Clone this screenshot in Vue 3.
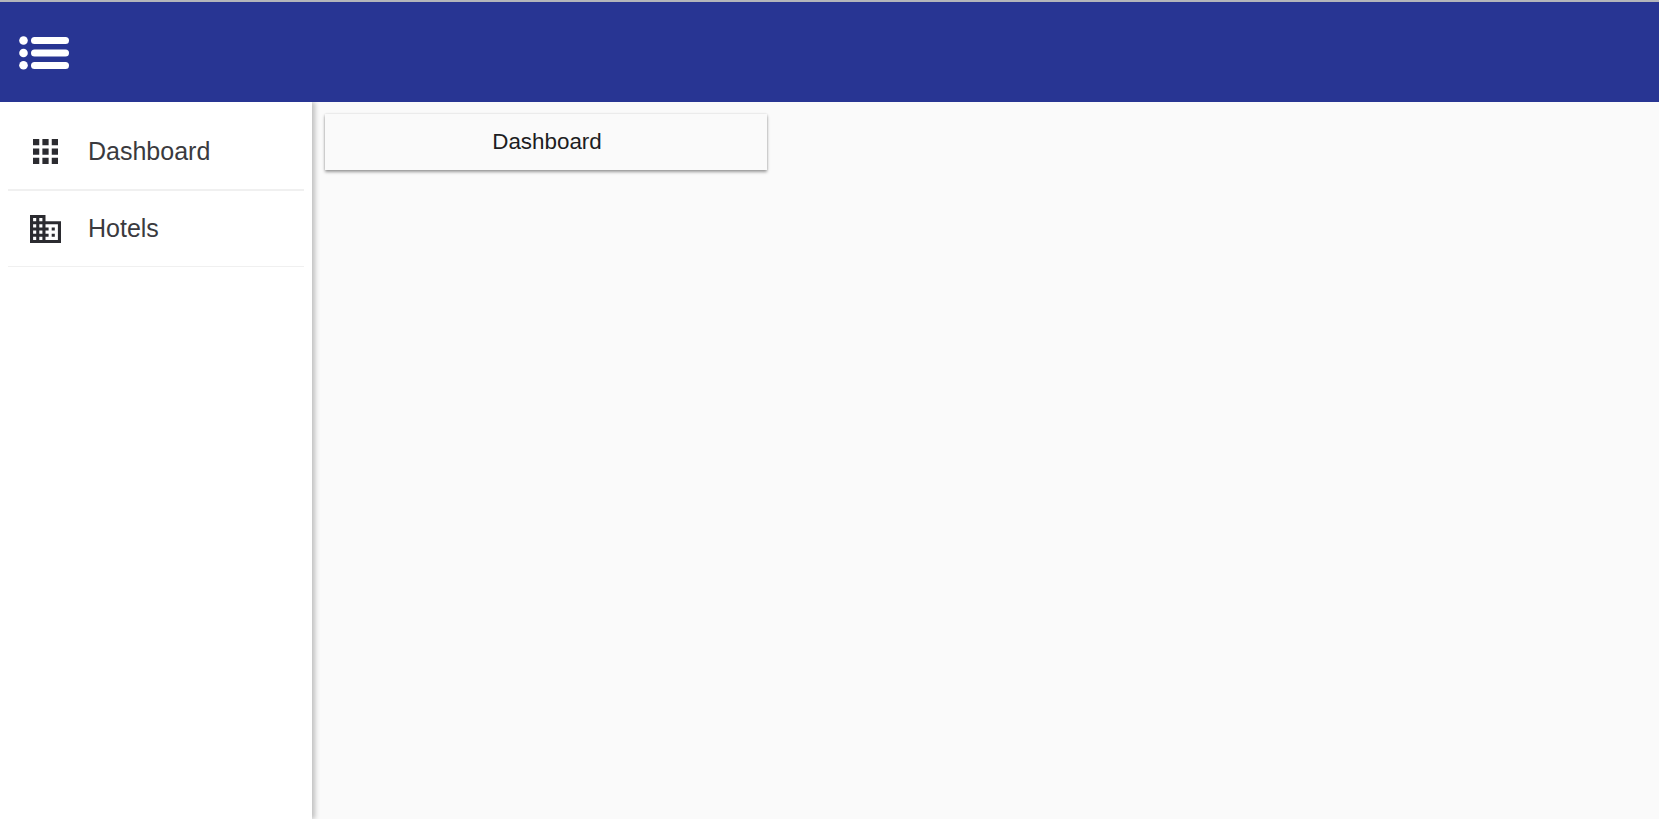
<script setup>
const menu = [
  { label: 'Dashboard', icon: 'grid' },
  { label: 'Hotels', icon: 'hotel' },
]
</script>

<template>
  <div class="page">
    <header class="topbar">
      <svg class="menu-icon" width="52" height="34" viewBox="0 0 52 34" fill="#fff">
        <circle cx="4.5" cy="4.5" r="4.3" />
        <circle cx="4.5" cy="17" r="4.3" />
        <circle cx="4.5" cy="29.3" r="4.3" />
        <rect x="12" y="1" width="38" height="7" rx="3.5" />
        <rect x="12" y="13.5" width="38" height="7" rx="3.5" />
        <rect x="12" y="26" width="38" height="7" rx="3.5" />
      </svg>
    </header>
    <div class="body">
      <aside class="sidebar">
        <a v-for="item in menu" :key="item.label" class="item">
          <span class="icon-slot">
            <svg v-if="item.icon === 'grid'" width="25" height="25" viewBox="4 4 16 16" fill="#2b2b30">
              <path d="M4 8h4V4H4v4zm6 12h4v-4h-4v4zm-6 0h4v-4H4v4zm0-6h4v-4H4v4zm6 0h4v-4h-4v4zm6-10v4h4V4h-4zm-6 4h4V4h-4v4zm6 6h4v-4h-4v4zm0 6h4v-4h-4v4z" />
            </svg>
            <svg v-else width="31" height="28" viewBox="2 3 20 18" preserveAspectRatio="none" fill="#2b2b30">
              <path d="M12 7V3H2v18h20V7H12zM6 19H4v-2h2v2zm0-4H4v-2h2v2zm0-4H4V9h2v2zm0-4H4V5h2v2zm4 12H8v-2h2v2zm0-4H8v-2h2v2zm0-4H8V9h2v2zm0-4H8V5h2v2zm10 12h-8v-2h2v-2h-2v-2h2v-2h-2V9h8v10zm-2-8h-2v2h2v-2zm0 4h-2v2h2v-2z" />
            </svg>
          </span>
          <span class="label">{{ item.label }}</span>
        </a>
      </aside>
      <main class="content">
        <div class="card">Dashboard</div>
      </main>
    </div>
  </div>
</template>

<style scoped>
.page {
  height: 819px;
  display: flex;
  flex-direction: column;
  overflow: hidden;
  font-family: "Liberation Sans", Arial, sans-serif;
  background: #fafafa;
}
.topbar {
  flex: none;
  position: relative;
  z-index: 1;
  box-sizing: content-box;
  height: 97.5px;
  padding: 2px 0 0 19px;
  border-top: 2px solid #b4b5bb;
  background: #283593;
  display: flex;
  align-items: center;
}
.menu-icon { display: block; }
.body {
  flex: 1;
  display: flex;
  min-height: 0;
}
.sidebar {
  flex: none;
  width: 312px;
  background: #fff;
  box-shadow: 3px 0 5px rgba(0, 0, 0, 0.24);
  padding: 0 8px;
  box-sizing: border-box;
}
.item {
  display: flex;
  align-items: center;
  height: 76px;
  border-bottom: 1.5px solid #f0f0f0;
  box-sizing: border-box;
}
.item:first-child { height: 89.5px; padding-top: 13px; border-bottom-width: 2px; }
.icon-slot {
  width: 72px;
  padding-left: 22px;
  box-sizing: border-box;
  display: flex;
  align-items: center;
  flex: none;
}
.item:first-child .icon-slot { padding-left: 25px; }
.label {
  margin-left: 8px;
  font-size: 25px;
  color: #3a3a3e;
}
.content {
  flex: 1;
  padding: 12.5px 13px;
  min-width: 0;
}
.card {
  width: 442px;
  height: 56px;
  background: #fafafa;
  display: flex;
  align-items: center;
  justify-content: center;
  font-size: 22.4px;
  color: #1d1d22;
  padding-left: 2px;
  box-sizing: border-box;
  box-shadow: 0 2px 3px rgba(0, 0, 0, 0.38), 0 0 2px rgba(0, 0, 0, 0.12);
}
</style>
